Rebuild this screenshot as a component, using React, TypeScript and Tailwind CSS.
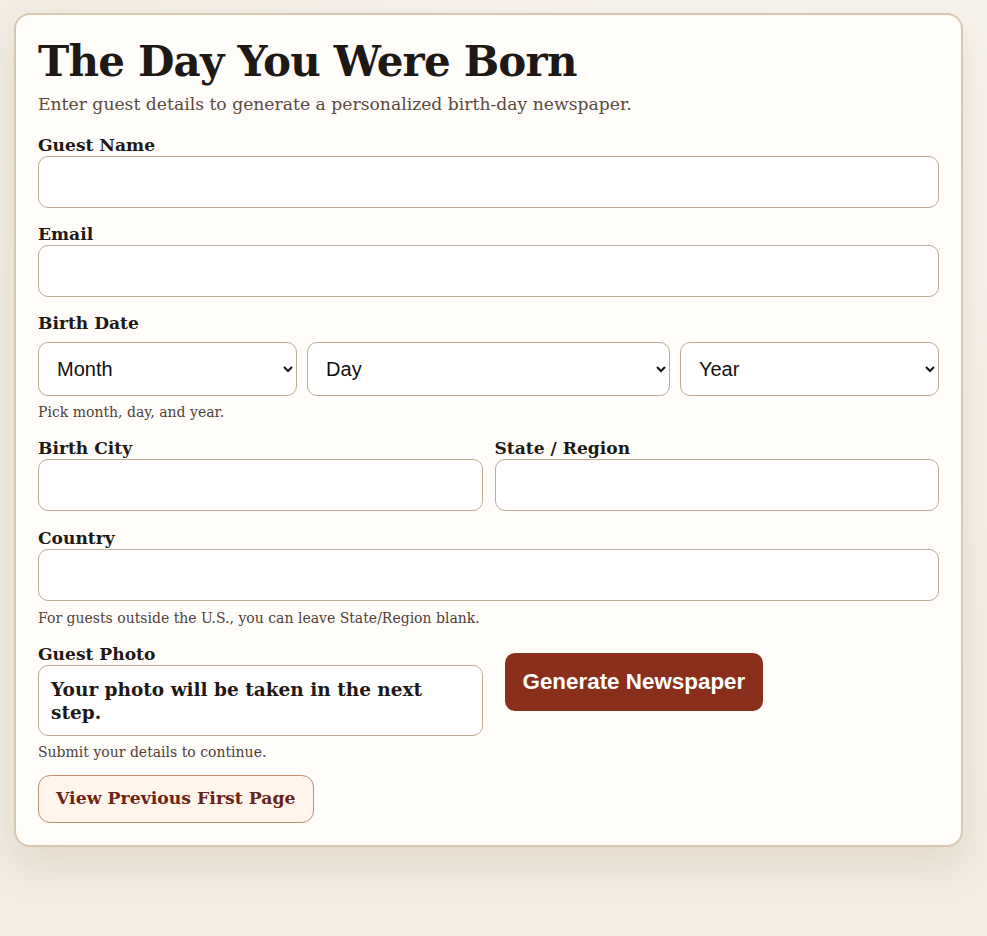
import React from "react";

const serif = "font-['DejaVu_Serif',serif]";

function Label({ children }: { children: React.ReactNode }) {
  return (
    <label className={`block h-[22px] text-[17.1px] leading-[22px] font-bold text-[#1f1915] ${serif}`}>
      {children}
    </label>
  );
}

function TextInput() {
  return (
    <input
      type="text"
      className="block h-[52px] w-full rounded-[10px] border border-[#bcab94] bg-white px-4 text-[18px] outline-none"
    />
  );
}

function Select({ label }: { label: string }) {
  return (
    <select className="h-[54px] w-full rounded-[10px] border border-[#bcab94] bg-white pl-[14px] pr-2 font-['Liberation_Sans',sans-serif] text-[20px] text-[#111] outline-none">
      <option>{label}</option>
    </select>
  );
}

function Hint({ children }: { children: React.ReactNode }) {
  return (
    <p className={`h-[18px] text-[14px] leading-[18px] text-[#4f4239] ${serif}`}>{children}</p>
  );
}

export default function App() {
  return (
    <div className="min-h-[936px] w-full bg-[radial-gradient(circle_at_80%_0%,#f8f4ee,#f2ece2_70%)] pt-[13px]">
      <div className="ml-[14px] w-[949px] rounded-[16px] border-2 border-[#d9c8b1] bg-[#fffdf9] p-[22px] shadow-[0_18px_40px_rgba(120,90,50,0.12)]">
        <h1 className={`h-[50px] text-[42px] leading-[50px] font-bold tracking-[-0.8px] text-[#1f1915] ${serif}`}>
          The Day You Were Born
        </h1>
        <p className={`mt-[5px] h-[24px] text-[17.2px] leading-[24px] text-[#5a4a40] ${serif}`}>
          Enter guest details to generate a personalized birth-day newspaper.
        </p>

        <div className="mt-[18px]">
          <Label>Guest Name</Label>
          <TextInput />
        </div>

        <div className="mt-[15px]">
          <Label>Email</Label>
          <TextInput />
        </div>

        <div className="mt-[15px]">
          <Label>Birth Date</Label>
          <div className="mt-[8px] grid grid-cols-[1fr_1.4fr_1fr] gap-[10px]">
            <Select label="Month" />
            <Select label="Day" />
            <Select label="Year" />
          </div>
          <div className="mt-[7px]">
            <Hint>Pick month, day, and year.</Hint>
          </div>
        </div>

        <div className="mt-[16px] grid grid-cols-2 gap-[12px]">
          <div>
            <Label>Birth City</Label>
            <TextInput />
          </div>
          <div>
            <Label>State / Region</Label>
            <TextInput />
          </div>
        </div>

        <div className="mt-[16px]">
          <Label>Country</Label>
          <TextInput />
          <div className="mt-[8px]">
            <Hint>For guests outside the U.S., you can leave State/Region blank.</Hint>
          </div>
        </div>

        <div className="mt-[16px] grid grid-cols-2 gap-[12px]">
          <div>
            <Label>Guest Photo</Label>
            <div className={`h-[71px] rounded-[10px] border border-[#bcab94] bg-white px-[12px] pt-[12px] text-[18.5px] leading-[23px] font-bold text-[#1f1915] ${serif}`}>
              Your photo will be taken in the next step.
            </div>
            <div className="mt-[7px]">
              <Hint>Submit your details to continue.</Hint>
            </div>
          </div>
          <div className="pl-[10px] pt-[10px]">
            <button className="h-[58px] rounded-[10px] bg-[#8b2f1d] px-[18px] font-['Liberation_Sans',sans-serif] text-[22.4px] font-bold text-white">
              Generate Newspaper
            </button>
          </div>
        </div>

        <button className={`mt-[14px] h-[48px] rounded-[12px] border border-[#c18c70] bg-[#fff5ec] px-[17px] text-[17.3px] font-bold text-[#6a2416] ${serif}`}>
          View Previous First Page
        </button>
      </div>
    </div>
  );
}
